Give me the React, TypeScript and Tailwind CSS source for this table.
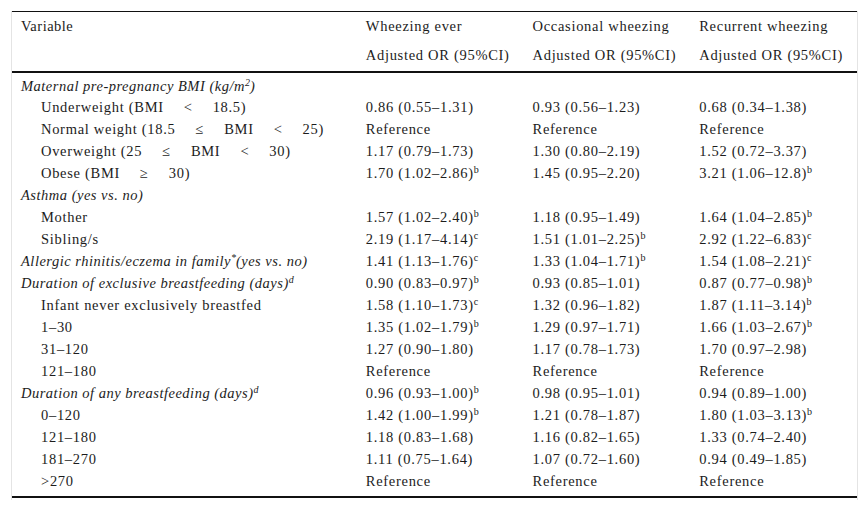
const sp = <span className="inline-block w-[20px]" />

type Row = {
  label: React.ReactNode
  italic?: boolean
  indent?: boolean
  cells: React.ReactNode[]
}

const sup = (s: string) => <sup className="text-[10px] leading-none tracking-normal">{s}</sup>

const rows: Row[] = [
  { label: <>Maternal pre-pregnancy BMI (kg/m{sup('2')})</>, italic: true, cells: ['', '', ''] },
  { label: <>Underweight (BMI{sp}&lt;{sp}18.5)</>, indent: true, cells: ['0.86 (0.55–1.31)', '0.93 (0.56–1.23)', '0.68 (0.34–1.38)'] },
  { label: <>Normal weight (18.5{sp}≤{sp}BMI{sp}&lt;{sp}25)</>, indent: true, cells: ['Reference', 'Reference', 'Reference'] },
  { label: <>Overweight (25{sp}≤{sp}BMI{sp}&lt;{sp}30)</>, indent: true, cells: ['1.17 (0.79–1.73)', '1.30 (0.80–2.19)', '1.52 (0.72–3.37)'] },
  { label: <>Obese (BMI{sp}≥{sp}30)</>, indent: true, cells: [<>1.70 (1.02–2.86){sup('b')}</>, '1.45 (0.95–2.20)', <>3.21 (1.06–12.8){sup('b')}</>] },
  { label: 'Asthma (yes vs. no)', italic: true, cells: ['', '', ''] },
  { label: 'Mother', indent: true, cells: [<>1.57 (1.02–2.40){sup('b')}</>, '1.18 (0.95–1.49)', <>1.64 (1.04–2.85){sup('b')}</>] },
  { label: 'Sibling/s', indent: true, cells: [<>2.19 (1.17–4.14){sup('c')}</>, <>1.51 (1.01–2.25){sup('b')}</>, <>2.92 (1.22–6.83){sup('c')}</>] },
  { label: <>Allergic rhinitis/eczema in family{sup('*')}(yes vs. no)</>, italic: true, cells: [<>1.41 (1.13–1.76){sup('c')}</>, <>1.33 (1.04–1.71){sup('b')}</>, <>1.54 (1.08–2.21){sup('c')}</>] },
  { label: <>Duration of exclusive breastfeeding (days){sup('d')}</>, italic: true, cells: [<>0.90 (0.83–0.97){sup('b')}</>, '0.93 (0.85–1.01)', <>0.87 (0.77–0.98){sup('b')}</>] },
  { label: 'Infant never exclusively breastfed', indent: true, cells: [<>1.58 (1.10–1.73){sup('c')}</>, '1.32 (0.96–1.82)', <>1.87 (1.11–3.14){sup('b')}</>] },
  { label: '1–30', indent: true, cells: [<>1.35 (1.02–1.79){sup('b')}</>, '1.29 (0.97–1.71)', <>1.66 (1.03–2.67){sup('b')}</>] },
  { label: '31–120', indent: true, cells: ['1.27 (0.90–1.80)', '1.17 (0.78–1.73)', '1.70 (0.97–2.98)'] },
  { label: '121–180', indent: true, cells: ['Reference', 'Reference', 'Reference'] },
  { label: <>Duration of any breastfeeding (days){sup('d')}</>, italic: true, cells: [<>0.96 (0.93–1.00){sup('b')}</>, '0.98 (0.95–1.01)', '0.94 (0.89–1.00)'] },
  { label: '0–120', indent: true, cells: [<>1.42 (1.00–1.99){sup('b')}</>, '1.21 (0.78–1.87)', <>1.80 (1.03–3.13){sup('b')}</>] },
  { label: '121–180', indent: true, cells: ['1.18 (0.83–1.68)', '1.16 (0.82–1.65)', '1.33 (0.74–2.40)'] },
  { label: '181–270', indent: true, cells: ['1.11 (0.75–1.64)', '1.07 (0.72–1.60)', '0.94 (0.49–1.85)'] },
  { label: '>270', indent: true, cells: ['Reference', 'Reference', 'Reference'] },
]

export default function App() {
  return (
    <div className="h-[509px] w-[868px] bg-white pl-[11px] pt-[11px] font-['Liberation_Serif','Times_New_Roman',serif]">
      <div className="w-[847px] border-x border-[#e4e4e4] pb-[2px]">
        <table className="w-full border-collapse text-[14.5px] tracking-[0.7px] text-[#1c1c1c]">
          <colgroup>
            <col className="w-[345px]" />
            <col className="w-[167px]" />
            <col className="w-[167px]" />
            <col className="w-[167px]" />
          </colgroup>
          <thead>
            <tr className="h-[30px] border-t border-[#111]">
              <td className="pl-[9px] tracking-[0.5px]">Variable</td>
              <td className="pl-[9px]">Wheezing ever</td>
              <td className="pl-[9px]">Occasional wheezing</td>
              <td className="pl-[9px]">Recurrent wheezing</td>
            </tr>
            <tr className="h-[30px] border-b-2 border-[#111]">
              <td />
              <td className="pl-[9px]">Adjusted OR (95%CI)</td>
              <td className="pl-[9px]">Adjusted OR (95%CI)</td>
              <td className="pl-[9px]">Adjusted OR (95%CI)</td>
            </tr>
          </thead>
          <tbody className="border-b-2 border-[#111]">
            {rows.map((r, i) => (
              <tr
                key={i}
                className={i === 0 ? 'h-[25px]' : i === rows.length - 1 ? 'h-[26px] align-top' : 'h-[22px]'}
              >
                <td
                  className={`whitespace-nowrap ${i === 0 ? 'pt-[3px]' : ''} ${r.indent ? 'pl-[29px]' : 'pl-[9px]'} ${r.italic ? 'italic tracking-[0.5px]' : ''}`}
                >
                  {r.label}
                </td>
                {r.cells.map((c, j) => (
                  <td key={j} className={`whitespace-nowrap pl-[9px] ${i === 0 ? 'pt-[3px]' : ''}`}>
                    {c}
                  </td>
                ))}
              </tr>
            ))}
          </tbody>
        </table>
      </div>
    </div>
  )
}
